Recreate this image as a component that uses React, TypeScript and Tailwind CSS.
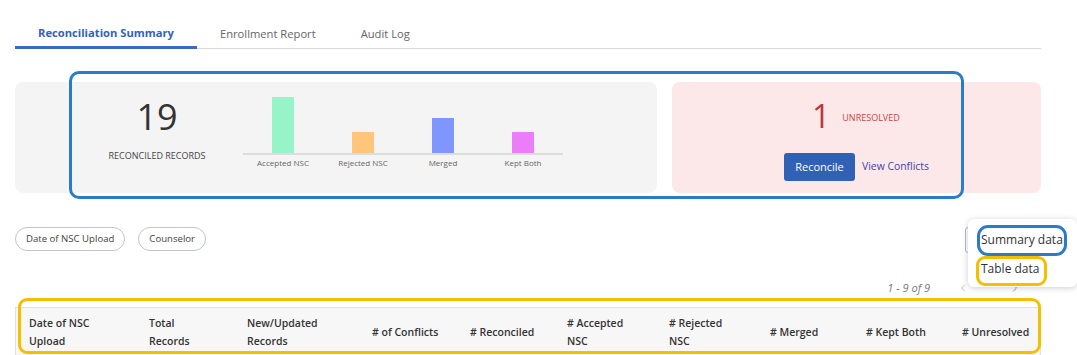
import { ChevronLeft, ChevronRight } from "lucide-react";

const bars = [
  { label: "Accepted NSC", h: "h-[56px]", color: "bg-[#97f4c8]" },
  { label: "Rejected NSC", h: "h-[21px]", color: "bg-[#ffc67b]" },
  { label: "Merged", h: "h-[35px]", color: "bg-[#7f95ff]" },
  { label: "Kept Both", h: "h-[21px]", color: "bg-[#eb7ef8]" },
];

const columns = [
  { w: "w-[120px]", lines: ["Date of NSC", "Upload"] },
  { w: "w-[98px]", lines: ["Total", "Records"] },
  { w: "w-[125px]", lines: ["New/Updated", "Records"] },
  { w: "w-[98px]", lines: ["# of Conflicts"] },
  { w: "w-[97px]", lines: ["# Reconciled"] },
  { w: "w-[102px]", lines: ["# Accepted", "NSC"] },
  { w: "w-[101px]", lines: ["# Rejected", "NSC"] },
  { w: "w-[96px]", lines: ["# Merged"] },
  { w: "w-[96px]", lines: ["# Kept Both"] },
  { w: "flex-1", lines: ["# Unresolved"] },
];

export default function App() {
  return (
    <div className="relative w-[1077px] h-[355px] overflow-hidden bg-white font-['Open_Sans',sans-serif] text-[#333]">
      <div className="ml-[15px] w-[1026px] pt-[20px]">
        {/* tabs */}
        <div className="flex h-[29px] border-b border-[#d9d9d9]">
          <div className="flex items-center px-[23px] -mb-px border-b-[3px] border-[#3a6bc4] text-[11.2px] font-bold text-[#3462b6]">
            Reconciliation Summary
          </div>
          <div className="flex items-center px-[23px] text-[11.2px] text-[#666]">Enrollment Report</div>
          <div className="flex items-center px-[22px] text-[11.2px] text-[#666]">Audit Log</div>
        </div>

        {/* summary cards */}
        <div className="mt-[33px] flex gap-[15px] h-[111px]">
          <div className="w-[642px] rounded-[8px] bg-[#f4f4f4] flex">
            <div className="ml-[82px] w-[120px] pt-[17px] flex flex-col items-center">
              <div className="text-[36px] leading-[36px] text-[#333]">19</div>
              <div className="mt-[15px] text-[9px] leading-[12px] text-[#444]">RECONCILED RECORDS</div>
            </div>
            <div className="ml-[26px] pt-[8px]">
              <div className="flex items-end h-[65px] border-b-2 border-[#dcdcdc]">
                {bars.map((b) => (
                  <div key={b.label} className="w-[80px] flex justify-center">
                    <div className={`w-[22px] ${b.h} ${b.color}`} />
                  </div>
                ))}
              </div>
              <div className="flex mt-[3px]">
                {bars.map((b) => (
                  <div key={b.label} className="w-[80px] text-center text-[8px] leading-[10px] text-[#666]">
                    {b.label}
                  </div>
                ))}
              </div>
            </div>
          </div>

          <div className="flex-1 rounded-[8px] bg-[#fde8e9]">
            <div className="flex items-center pl-[140px] pt-[18px] h-[50px]">
              <span className="text-[32px] leading-[32px] text-[#b8383d]">1</span>
              <span className="ml-[12px] mt-[3px] text-[9px] text-[#c9444a]">UNRESOLVED</span>
            </div>
            <div className="flex items-center pl-[112px] mt-[21px]">
              <button className="w-[71px] h-[28px] rounded-[3px] bg-[#3161b5] text-white text-[11px]">Reconcile</button>
              <span className="ml-[7px] text-[10.4px] text-[#3c46a5]">View Conflicts</span>
            </div>
          </div>
        </div>

        {/* filters */}
        <div className="mt-[34px] flex items-start">
          <div className="flex gap-[13px]">
            <span className="h-[24px] px-[10px] flex items-center rounded-full border border-[#c4c4c4] text-[9.6px] text-[#444]">
              Date of NSC Upload
            </span>
            <span className="h-[24px] px-[10px] flex items-center rounded-full border border-[#c4c4c4] text-[9.6px] text-[#444]">
              Counselor
            </span>
          </div>
          <div className="ml-auto w-[76px] h-[26px] rounded-[3px] border border-[#a9b9e3]" />
        </div>

        {/* pagination */}
        <div className="mt-[27px] h-[16px] flex items-center justify-end pr-[20px]">
          <span className="text-[11px] italic text-[#777]">1 - 9 of 9</span>
          <ChevronLeft className="ml-[27px] text-[#bbb]" size={12} />
          <ChevronRight className="ml-[40px] text-[#999]" size={12} />
        </div>

        {/* table header */}
        <div className="mt-[11px] flex bg-[#f7f7f7] border border-b-0 border-[#e0e0e0] h-[60px] pt-[6px]">
          {columns.map((c) => (
            <div key={c.lines.join(" ")} className={`${c.w} pl-[13px] h-[36px] flex flex-col justify-center text-[10.5px] leading-[18px] font-semibold text-[#333]`}>
              {c.lines.map((l) => (
                <span key={l}>{l}</span>
              ))}
            </div>
          ))}
        </div>
      </div>

      {/* annotations & menu overlay */}
      <div className="absolute left-[69px] top-[71px] w-[895px] h-[128px] rounded-[10px] border-[3px] border-[#2b7cc8]" />
      <div className="absolute left-[18px] top-[298px] w-[1023px] h-[56px] rounded-[9px] border-[3px] border-[#f5bf00]" />

      <div className="absolute left-[968px] top-[219px] w-[109px] h-[68px] rounded-[6px] bg-white shadow-[0_1px_6px_rgba(0,0,0,0.2)]">
        <div className="absolute left-[13px] top-[13px] text-[12px] leading-[16px] text-[#333]">Summary data</div>
        <div className="absolute left-[13px] top-[42px] text-[12px] leading-[16px] text-[#333]">Table data</div>
      </div>
      <div className="absolute left-[977px] top-[225px] w-[90px] h-[31px] rounded-[11px] border-[3px] border-[#2b7cc8]" />
      <div className="absolute left-[976px] top-[256px] w-[71px] h-[30px] rounded-[9px] border-[3px] border-[#f5bf00]" />
    </div>
  );
}
